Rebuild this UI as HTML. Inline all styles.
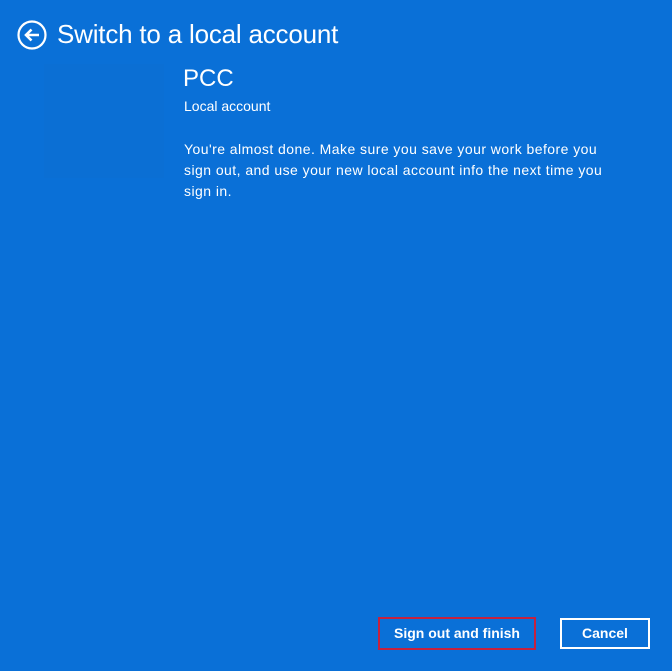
<!DOCTYPE html>
<html><head><meta charset="utf-8"><style>
html,body{margin:0;padding:0}
body{width:672px;height:671px;background:#0a70d7;position:relative;overflow:hidden;font-family:"Liberation Sans",sans-serif;color:#fff}
.t{position:absolute;left:57px;top:17px;font-size:26px;line-height:34px;font-weight:300;letter-spacing:-0.2px}
.back{position:absolute;left:17px;top:20px}
.av{position:absolute;left:44px;top:64px;width:120px;height:114px;background:#0b6fd4}
.pcc{position:absolute;left:183px;top:64px;font-size:24px;line-height:30px}
.la{position:absolute;left:184px;top:97px;font-size:14px;line-height:18px}
.p{position:absolute;left:184px;top:139px;white-space:nowrap;font-size:14px;line-height:21px;letter-spacing:0.45px}
.b1{position:absolute;left:378px;top:617px;width:154px;height:29px;border:2px solid #c4213f;box-sizing:content-box;font-size:14px;font-weight:bold;text-align:center;line-height:29px}
.b2{position:absolute;left:560px;top:618px;width:86px;height:27px;border:2px solid #fff;font-size:14px;font-weight:bold;text-align:center;line-height:27px}
</style></head><body>
<svg class="back" width="30" height="30" viewBox="0 0 30 30"><circle cx="15" cy="15" r="13.5" fill="none" stroke="#fff" stroke-width="2.2"/><path d="M22 15H9M14.5 9.5L9 15l5.5 5.5" fill="none" stroke="#fff" stroke-width="2.6"/></svg>
<div class="t">Switch to a local account</div>
<div class="av"></div>
<div class="pcc">PCC</div>
<div class="la">Local account</div>
<div class="p">You're almost done. Make sure you save your work before you<br>sign out, and use your new local account info the next time you<br>sign in.</div>
<div class="b1">Sign out and finish</div>
<div class="b2">Cancel</div>
</body></html>
